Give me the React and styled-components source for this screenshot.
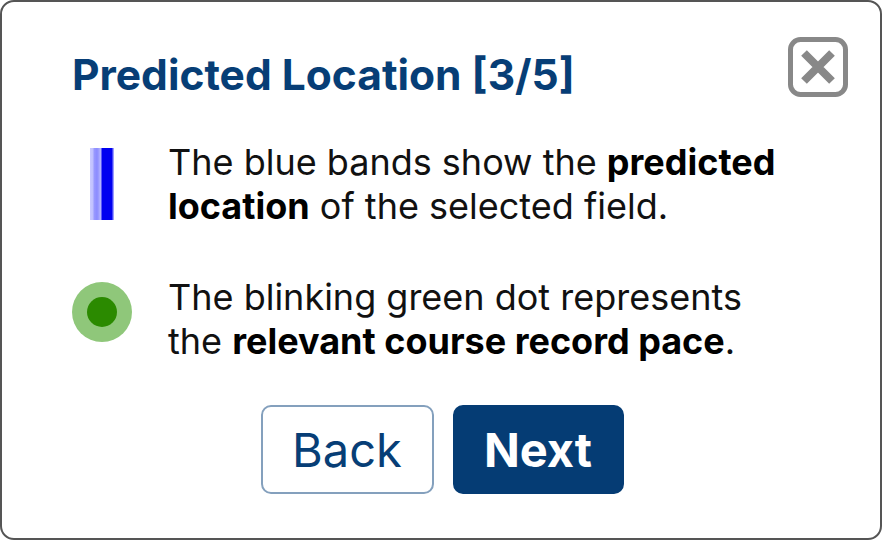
import React from "react";
import styled, { createGlobalStyle } from "styled-components";

const Global = createGlobalStyle`
  html, body { margin: 0; padding: 0; background: #fff; }
  body { width: 882px; height: 540px; overflow: hidden; font-family: Inter, "Noto Sans", sans-serif; }
  * { box-sizing: border-box; }
`;

const Card = styled.div`
  width: 882px;
  height: 540px;
  border: 2px solid #555;
  border-radius: 14px;
  background: #fff;
  padding: 48px 32px 0 70px;
  display: flex;
  flex-direction: column;
`;

const Header = styled.div`
  display: flex;
  justify-content: space-between;
  align-items: flex-start;
  height: 50px;
`;

const Title = styled.h1`
  margin: 0;
  font-size: 42.5px;
  line-height: 50px;
  font-weight: 700;
  color: #073e76;
`;

const CloseButton = styled.button`
  margin-top: -13px;
  padding: 0;
  border: none;
  background: none;
  width: 60px;
  height: 60px;
  cursor: pointer;
`;

const Rows = styled.div`
  margin-top: 40px;
  display: flex;
  flex-direction: column;
  gap: 47px;
`;

const Row = styled.div`
  display: grid;
  grid-template-columns: 96px 620px;
  align-items: center;
`;

const IconCell = styled.div`
  display: flex;
  justify-content: center;
  width: 60px;
  margin-top: ${(p) => p.$shift || 0}px;
`;

const Bands = styled.div`
  width: 24px;
  height: 72px;
  background: linear-gradient(
    to right,
    #cacaff 0px,
    #c0c0ff 3px,
    #9a9aff 4px,
    #8c8cff 7px,
    #a0a0ff 9px,
    #b4b4ff 10px,
    #b4b4ff 11px,
    #0000f0 12px,
    #0000f0 22px,
    #8c8cff 23px,
    #b0b0ff 24px
  );
`;

const Dot = styled.div`
  width: 60px;
  height: 60px;
  border-radius: 50%;
  background: #8fc77a;
  display: flex;
  align-items: center;
  justify-content: center;
  &::after {
    content: "";
    width: 30px;
    height: 30px;
    border-radius: 50%;
    background: #2b8a00;
  }
`;

const Text = styled.p`
  margin: 0;
  font-size: 36px;
  line-height: 44px;
  color: #111;
  b { font-weight: 700; color: #000; }
`;

const Buttons = styled.div`
  margin-top: 42px;
  display: flex;
  justify-content: center;
  gap: 19px;
  padding-right: 36px;
`;

const Btn = styled.button`
  width: ${(p) => (p.$primary ? "171px" : "173px")};
  height: 89px;
  border-radius: 10px;
  font-family: Inter, "Noto Sans", sans-serif;
  font-size: 47px;
  font-weight: ${(p) => (p.$primary ? 700 : 400)};
  color: ${(p) => (p.$primary ? "#fff" : "#073e76")};
  background: ${(p) => (p.$primary ? "#053c74" : "#fff")};
  border: 2px solid ${(p) => (p.$primary ? "#053c74" : "#84a0bd")};
  padding: 0;
`;

function CloseIcon() {
  return (
    <svg width="60" height="60" viewBox="0 0 60 60">
      <rect x="2.5" y="2.5" width="55" height="55" rx="10" fill="none" stroke="#888" strokeWidth="5" />
      <path d="M16 16 L44 44 M44 16 L16 44" stroke="#888" strokeWidth="8" strokeLinecap="butt" />
    </svg>
  );
}

export default function App() {
  return (
    <>
      <Global />
      <Card>
        <Header>
          <Title>Predicted Location [3/5]</Title>
          <CloseButton aria-label="Close"><CloseIcon /></CloseButton>
        </Header>
        <Rows>
          <Row>
            <IconCell $shift={0}><Bands /></IconCell>
            <Text>
              The blue bands show the <b>predicted location</b> of the selected field.
            </Text>
          </Row>
          <Row>
            <IconCell $shift={-15}><Dot /></IconCell>
            <Text>
              The blinking green dot represents the <b>relevant course record pace</b>.
            </Text>
          </Row>
        </Rows>
        <Buttons>
          <Btn>Back</Btn>
          <Btn $primary>Next</Btn>
        </Buttons>
      </Card>
    </>
  );
}
